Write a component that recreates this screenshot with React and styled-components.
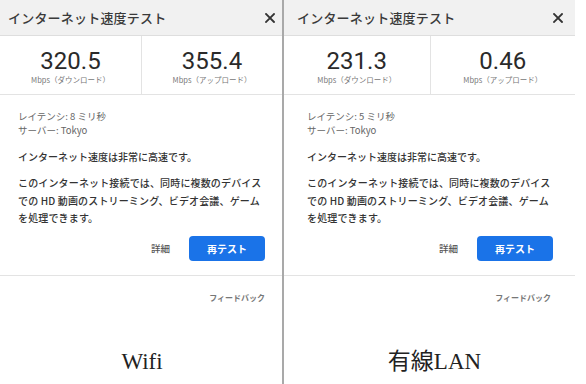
import styled, { createGlobalStyle } from "styled-components";

const GlobalStyle = createGlobalStyle`
  html, body {
    margin: 0;
    padding: 0;
    background: #fff;
  }
  body {
    font-family: "Noto Sans CJK JP", "Noto Sans", sans-serif;
    color: #202124;
  }
`;

const Page = styled.div`
  width: 586px;
  height: 384px;
  display: flex;
  overflow: hidden;
  background: #fff;
`;

const Column = styled.div`
  width: ${(p) => p.$width}px;
  height: 100%;
  display: flex;
  flex-direction: column;
  flex-shrink: 0;
  border-right: ${(p) => (p.$divider ? "2px solid #a9a9a9" : "none")};
`;

const Header = styled.div`
  height: 35px;
  display: flex;
  align-items: center;
  justify-content: space-between;
  padding: 0 ${(p) => p.$right}px 0 ${(p) => p.$left}px;
  background: #f1f1f1;
  border-bottom: 1px solid #dedede;
`;

const Title = styled.div`
  font-size: 13px;
  font-weight: 500;
  color: #3a3a3a;
  letter-spacing: 0.2px;
`;

const Close = styled.svg`
  width: 10px;
  height: 10px;
  display: block;
`;

const Metrics = styled.div`
  height: 58px;
  display: grid;
  grid-template-columns: 1fr 1fr;
  border-bottom: 1px solid #e3e3e3;
`;

const Metric = styled.div`
  display: flex;
  flex-direction: column;
  align-items: center;
  justify-content: center;
  padding-top: 3px;
  border-left: ${(p) => (p.$split ? "1px solid #e3e3e3" : "none")};
`;

const Value = styled.div`
  font-family: Roboto, "Liberation Sans", sans-serif;
  font-size: 24px;
  line-height: 26px;
  color: #2a2a2a;
`;

const Unit = styled.div`
  font-size: 7.5px;
  line-height: 10px;
  margin-top: 1px;
  color: #777;
`;

const Body = styled.div`
  padding: 14px ${(p) => p.$right}px 0 ${(p) => p.$left}px;
  height: 181px;
  border-bottom: 1px solid #e3e3e3;
  box-sizing: border-box;
`;

const Meta = styled.div`
  font-size: 9.5px;
  line-height: 14px;
  color: #666;
`;

const Lead = styled.p`
  margin: 11px 0 0;
  font-size: 10px;
  line-height: 17px;
  font-weight: 500;
  color: #333;
`;

const Paragraph = styled.p`
  margin: 9px 0 0;
  font-size: 10px;
  line-height: 17.5px;
  font-weight: 500;
  color: #333;
  letter-spacing: 0.15px;
  white-space: nowrap;
`;

const Actions = styled.div`
  display: flex;
  justify-content: flex-end;
  align-items: center;
  gap: 19px;
  margin-top: 9px;
`;

const TextButton = styled.span`
  font-size: 9.5px;
  font-weight: 500;
  color: #555;
`;

const Primary = styled.button`
  width: 76px;
  height: 25px;
  border: none;
  border-radius: 4px;
  background: #1a73e8;
  color: #fff;
  font-family: "Noto Sans CJK JP", sans-serif;
  font-size: 10px;
  font-weight: 700;
  padding: 0;
`;

const Feedback = styled.div`
  padding: 17px ${(p) => p.$right}px 0 0;
  text-align: right;
  font-size: 8px;
  line-height: 10px;
  font-weight: 700;
  color: #777;
`;

const Caption = styled.div`
  margin-top: 46px;
  text-align: center;
  font-family: "Liberation Serif", "Noto Sans CJK JP", serif;
  font-size: 23px;
  line-height: 26px;
  color: #222;
  padding-left: ${(p) => p.$shift}px;
`;

const CloseIcon = () => (
  <Close viewBox="0 0 10 10">
    <path d="M1 1L9 9M9 1L1 9" stroke="#333" strokeWidth="1.8" strokeLinecap="square" />
  </Close>
);

const panels = [
  {
    width: 280,
    divider: true,
    inset: 0,
    feedback: 17,
    down: "320.5",
    up: "355.4",
    latency: "8",
    caption: "Wifi",
    shift: 2,
  },
  {
    width: 291,
    divider: false,
    inset: 5,
    feedback: 24,
    down: "231.3",
    up: "0.46",
    latency: "5",
    caption: "有線LAN",
    shift: 10,
  },
];

function Panel({ p }) {
  return (
    <Column $width={p.width + (p.divider ? 2 : 0)} $divider={p.divider}>
      <Header $left={8 + p.inset} $right={7 + p.inset}>
        <Title>インターネット速度テスト</Title>
        <CloseIcon />
      </Header>
      <Metrics>
        <Metric>
          <Value>{p.down}</Value>
          <Unit>Mbps（ダウンロード）</Unit>
        </Metric>
        <Metric $split>
          <Value>{p.up}</Value>
          <Unit>Mbps（アップロード）</Unit>
        </Metric>
      </Metrics>
      <Body $left={18 + p.inset} $right={17 + p.inset}>
        <Meta>レイテンシ: {p.latency} ミリ秒</Meta>
        <Meta>サーバー: Tokyo</Meta>
        <Lead>インターネット速度は非常に高速です。</Lead>
        <Paragraph>
          このインターネット接続では、同時に複数のデバイス
          <br />
          での HD 動画のストリーミング、ビデオ会議、ゲーム
          <br />
          を処理できます。
        </Paragraph>
        <Actions>
          <TextButton>詳細</TextButton>
          <Primary>再テスト</Primary>
        </Actions>
      </Body>
      <Feedback $right={p.feedback}>フィードバック</Feedback>
      <Caption $shift={p.shift}>{p.caption}</Caption>
    </Column>
  );
}

function App() {
  return (
    <>
      <GlobalStyle />
      <Page>
        {panels.map((p) => (
          <Panel key={p.caption} p={p} />
        ))}
      </Page>
    </>
  );
}

export default App;
